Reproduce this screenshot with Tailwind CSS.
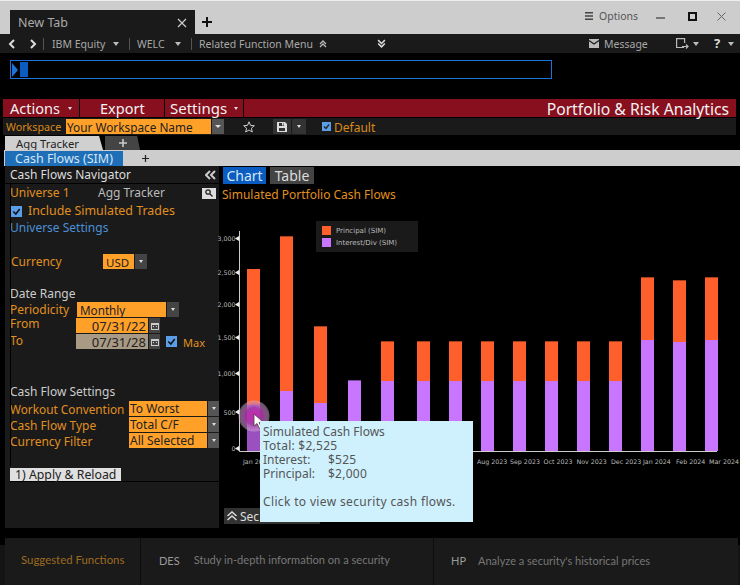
<!DOCTYPE html>
<html lang="en">
<head>
<meta charset="UTF-8" />
<title>Portfolio & Risk Analytics</title>
<script src="https://cdn.jsdelivr.net/npm/@tailwindcss/browser@4"></script>
</head>
<body class="w-[740px] h-[585px] overflow-hidden bg-black font-['Noto_Sans',sans-serif] text-[12px] leading-none">

<!-- tab strip -->
<div class="h-[34px] bg-[#cdcdcd] flex items-end pl-[10px] border-t border-[#eee]">
  <div class="w-[185px] h-[24px] bg-[#1a1a1a] flex items-center justify-between pl-[8px] pr-[8px] pt-[2px] text-[#aaa] text-[12.5px]">
    <span>New Tab</span>
    <svg class="w-[10px] h-[10px]" viewBox="0 0 10 10" stroke="#ccc" stroke-width="1.2"><path d="M1 1l8 8M9 1l-8 8"/></svg>
  </div>
  <svg class="ml-[7px] mb-[7px] w-[10px] h-[10px]" viewBox="0 0 10 10" stroke="#111" stroke-width="2"><path d="M5 0v10M0 5h10"/></svg>
  <div class="ml-auto flex items-center self-start mt-[10px] text-[#555] pr-[14px]">
    <svg class="w-[8px] h-[8px]" viewBox="0 0 8 8" fill="#444"><path d="M0 0h8v1.6H0zM0 3.2h8v1.6H0zM0 6.4h8V8H0z"/></svg>
    <span class="ml-[6px] w-[39px] text-[10.5px] whitespace-nowrap">Options</span>
    <div class="ml-[18px] mt-[3px] w-[9px] h-[2px] bg-[#777]"></div>
    <div class="ml-[23px] w-[9px] h-[9px] border-2 border-[#111]"></div>
    <svg class="ml-[20px] w-[9px] h-[9px]" viewBox="0 0 9 9" stroke="#666" stroke-width="1"><path d="M.5.5l8 8M8.5.5l-8 8"/></svg>
  </div>
</div>

<!-- toolbar -->
<div class="h-[19px] bg-[#1a1a1a] flex items-center text-[#a8a8a8] text-[10.5px] whitespace-nowrap">
  <svg class="ml-[8px] w-[8px] h-[10px]" viewBox="0 0 8 10" fill="none" stroke="#ddd" stroke-width="2"><path d="M6 1L2 5l4 4"/></svg>
  <svg class="ml-[13px] w-[8px] h-[10px]" viewBox="0 0 8 10" fill="none" stroke="#ddd" stroke-width="2"><path d="M2 1l4 4-4 4"/></svg>
  <div class="ml-[6px] w-px h-[12px] bg-[#555]"></div>
  <span class="ml-[8px] pt-px w-[53px]">IBM Equity</span>
  <span class="ml-[8px] w-0 h-0 border-x-[3px] border-x-transparent border-t-[4px] border-t-[#bbb]"></span>
  <div class="ml-[10px] w-px h-[12px] bg-[#555]"></div>
  <span class="ml-[7px] pt-px w-[30px]">WELC</span>
  <span class="ml-[8px] w-0 h-0 border-x-[3px] border-x-transparent border-t-[4px] border-t-[#bbb]"></span>
  <div class="ml-[10px] w-px h-[12px] bg-[#555]"></div>
  <span class="ml-[7px] pt-px w-[114px]">Related Function Menu</span>
  <svg class="ml-[6px] w-[8px] h-[8px]" viewBox="0 0 8 8" fill="none" stroke="#bbb" stroke-width="1.3"><path d="M1 4l3-3 3 3M1 7l3-3 3 3"/></svg>
  <svg class="ml-[50px] w-[9px] h-[9px]" viewBox="0 0 8 8" fill="none" stroke="#ddd" stroke-width="1.3"><path d="M1 1l3 3 3-3M1 4l3 3 3-3"/></svg>
  <svg class="ml-[203px] w-[10px] h-[9px]" viewBox="0 0 10 9"><path fill="#bbb" d="M0 0h10v9H0z"/><path fill="none" stroke="#1a1a1a" stroke-width="1.2" d="M0 1.5l5 3.500 5-3.500"/></svg>
  <span class="ml-[5px] pt-px w-[43px]">Message</span>
  <svg class="ml-[29px] w-[13px] h-[11px]" viewBox="0 0 13 11" fill="none" stroke="#bbb" stroke-width="1.2"><path d="M8 9.500H.6V.6h8V5M6 8.500h6M10 6.500l2 2-2 2"/></svg>
  <span class="ml-[4px] w-0 h-0 border-x-[3px] border-x-transparent border-t-[4px] border-t-[#bbb]"></span>
  <span class="ml-[15px] text-[#ddd] font-bold text-[13px]">?</span>
  <span class="ml-[8px] w-0 h-0 border-x-[3px] border-x-transparent border-t-[4px] border-t-[#bbb]"></span>
</div>

<!-- command line -->
<div class="h-[46px] pt-[7px] pl-[10px]">
  <div class="w-[542px] h-[19px] border border-[#1c74d8] flex items-center pl-px">
    <span class="w-0 h-0 border-y-[7px] border-y-transparent border-l-[6px] border-l-[#1c74d8]"></span>
    <span class="ml-[2px] w-[8px] h-[15px] bg-[#0a5cc0]"></span>
  </div>
</div>

<!-- red menu -->
<div class="ml-[3px] w-[733px] h-[18px] bg-[#870f1e] flex items-center text-[#f2f2f2] text-[14.5px]">
  <div class="w-[76px] h-full flex items-center pl-[7px]"><span>Actions</span><span class="ml-[8px] w-0 h-0 border-x-[2px] border-x-transparent border-t-[3px] border-t-[#ddd]"></span></div>
  <div class="w-[85px] h-full border-l border-black flex items-center pl-[20px]">Export</div>
  <div class="w-[80px] h-full border-x border-black flex items-center pl-[5px] text-[15px]"><span>Settings</span><span class="ml-[7px] w-0 h-0 border-x-[2px] border-x-transparent border-t-[3px] border-t-[#ddd]"></span></div>
  <span class="ml-auto mr-[7px] pt-[3px] text-[15.7px]">Portfolio &amp; Risk Analytics</span>
</div>

<!-- workspace -->
<div class="ml-[3px] mt-px w-[733px] h-[17px] bg-[#1a1a1a] flex items-center text-[#d98a1a]">
  <span class="ml-[3px] w-[57px] text-[10.7px] pt-[2px]">Workspace</span>
  <div class="ml-[3px] w-[145px] h-[15px] bg-[#ffa028] text-[#222] flex items-center pl-[1px] pt-[2px] text-[11.8px]">Your Workspace Name</div>
  <div class="ml-px w-[12px] h-[15px] bg-[#555] flex items-center justify-center"><span class="w-0 h-0 border-x-[3px] border-x-transparent border-t-[3px] border-t-[#ddd]"></span></div>
  <svg class="ml-[19px] w-[12px] h-[12px]" viewBox="0 0 12 12" fill="none" stroke="#ccc" stroke-width="1"><path d="M6 .8l1.500 3.600 3.800.3-2.900 2.500.9 3.800L6 9l-3.300 2 .9-3.800L.7 4.700l3.800-.3z"/></svg>
  <div class="ml-[18px] w-[18px] h-[15px] bg-[#333] flex items-center justify-center"><svg class="w-[10px] h-[10px]" viewBox="0 0 10 10"><path fill="#ddd" d="M0 0h8l2 2v8H0z"/><path fill="#333" d="M2 1h5v3H2zM2 6h6v3H2z"/><path fill="#ddd" d="M5 1h1.500v2.500H5z"/></svg></div>
  <div class="ml-px w-[14px] h-[15px] bg-[#333] flex items-center justify-center"><span class="w-0 h-0 border-x-[2px] border-x-transparent border-t-[3px] border-t-[#ddd]"></span></div>
  <div class="ml-[16px] w-[9px] h-[9px] bg-[#5b9ee8] flex items-center justify-center"><svg class="w-[7px] h-[7px]" viewBox="0 0 7 7" fill="none" stroke="#222" stroke-width="1.3"><path d="M1 3.500l2 2 3-4"/></svg></div>
  <span class="ml-[3px] pt-[2px]">Default</span>
</div>

<!-- page tabs -->
<div class="h-[15px] pl-[5px] flex items-end">
  <div class="w-[98px] h-[14px] bg-[#d0d0d0] text-[#222] pl-[11px] pt-[2px] text-[11.3px] flex items-center [clip-path:polygon(0_0,96%_0,100%_100%,0_100%)]">Agg Tracker</div>
  <div class="ml-[2px] w-[35px] h-[14px] bg-[#444] flex items-center justify-center [clip-path:polygon(0_0,92%_0,100%_100%,0_100%)]"><svg class="w-[8px] h-[8px]" viewBox="0 0 8 8" stroke="#ccc" stroke-width="1.6"><path d="M4 0v8M0 4h8"/></svg></div>
</div>
<div class="ml-[4px] h-[16px] bg-[#cdcdcd] flex items-center pl-px">
  <div class="w-[118px] h-[15px] mt-px bg-[#1f6fb8] text-[#d5e6f5] pl-[10px] pt-[2px] flex items-center text-[12.5px]">Cash Flows (SIM)</div>
  <svg class="ml-[19px] w-[7px] h-[7px]" viewBox="0 0 8 8" stroke="#222" stroke-width="1.4"><path d="M4 0v8M0 4h8"/></svg>
</div>

<!-- main -->
<div class="flex h-[362px]">
  <!-- navigator -->
  <aside class="ml-[5px] w-[214px] bg-[#1a1a1a] flex flex-col text-[#e0901f]">
    <div class="h-[18px] flex items-center pl-[5px] text-[#ddd] border-b border-black">
      <span>Cash Flows Navigator</span>
      <svg class="ml-auto mr-[3px] w-[11px] h-[10px]" viewBox="0 0 11 10" fill="none" stroke="#ccc" stroke-width="2"><path d="M5 1L1 5l4 4M10 1L6 5l4 4"/></svg>
    </div>
    <div class="relative flex-1">
      <div class="absolute left-[5px] top-0 w-px h-[282px] bg-black"></div>
      <div class="pl-[5px] flex flex-col">
        <div class="h-[18px] flex items-center"><span class="w-[88px]">Universe 1</span><span class="text-[#bbb]">Agg Tracker</span><span class="ml-auto mr-[3px] w-[14px] h-[11px] bg-[#ddd] flex items-center justify-center"><svg class="w-[8px] h-[8px]" viewBox="0 0 8 8" fill="none" stroke="#222" stroke-width="1.3"><circle cx="3" cy="3" r="2.200"/><path d="M5 5l2.500 2.500"/></svg></span></div>
        <div class="h-[18px] flex items-center pl-px">
          <div class="w-[11px] h-[11px] bg-[#5b9ee8] flex items-center justify-center"><svg class="w-[9px] h-[9px]" viewBox="0 0 7 7" fill="none" stroke="#111" stroke-width="1.2"><path d="M1 3.500l2 2 3-4"/></svg></div>
          <span class="ml-[6px] text-[12.4px]">Include Simulated Trades</span>
        </div>
        <div class="h-[16px] flex items-center text-[#4a90d9]">Universe Settings</div>
        <div class="mt-[18px] mb-px h-[15px] flex items-center pl-px"><span class="w-[92px] pt-px">Currency</span><div class="w-[31px] h-[15px] bg-[#ffa028] text-[#222] flex items-center pl-[3px] pt-[2px] text-[11.5px]">USD</div><div class="ml-px w-[12px] h-[15px] bg-[#444] flex items-center justify-center"><span class="w-0 h-0 border-x-[2px] border-x-transparent border-t-[3px] border-t-[#ddd]"></span></div></div>
        <div class="mt-[16px] h-[16px] flex items-center text-[#ccc]">Date Range</div>
        <div class="mb-px h-[15px] flex items-center"><span class="w-[67px] pt-px">Periodicity</span><div class="w-[89px] h-[15px] bg-[#ffa028] text-[#222] flex items-center pl-[3px] pt-[2px] text-[11.7px]">Monthly</div><div class="ml-px w-[12px] h-[15px] bg-[#444] flex items-center justify-center"><span class="w-0 h-0 border-x-[2px] border-x-transparent border-t-[3px] border-t-[#ddd]"></span></div></div>
        <div class="mb-px h-[15px] flex items-center"><span class="w-[66px] -mt-[3px]">From</span><div class="w-[72px] h-[15px] bg-[#ffa028] text-[#222] flex items-center justify-end pr-[2px] pt-[2px] text-[13px]">07/31/22</div>
          <div class="ml-px w-[11px] h-[15px] bg-[#444] flex items-center justify-center"><svg class="w-[8px] h-[8px]" viewBox="0 0 8 8"><path fill="#ccc" d="M0 1h8v7H0z"/><path fill="#444" d="M1 3h6v4H1z"/><path fill="#ccc" d="M2 4h1v1H2zM5 4h1v1H5z"/></svg></div></div>
        <div class="mb-px h-[15px] flex items-center"><span class="w-[66px] -mt-[2px]">To</span><div class="w-[72px] h-[15px] bg-[#a89a84] text-[#222] flex items-center justify-end pr-[2px] pt-[2px] text-[13px]">07/31/28</div>
          <div class="ml-px w-[11px] h-[15px] bg-[#444] flex items-center justify-center"><svg class="w-[8px] h-[8px]" viewBox="0 0 8 8"><path fill="#ccc" d="M0 1h8v7H0z"/><path fill="#444" d="M1 3h6v4H1z"/><path fill="#ccc" d="M2 4h1v1H2zM5 4h1v1H5z"/></svg></div>
          <div class="ml-[6px] w-[11px] h-[11px] bg-[#5b9ee8] flex items-center justify-center"><svg class="w-[9px] h-[9px]" viewBox="0 0 7 7" fill="none" stroke="#111" stroke-width="1.2"><path d="M1 3.500l2 2 3-4"/></svg></div>
          <span class="ml-[6px] text-[11px] pt-[2px]">Max</span></div>
        <div class="mt-[34px] h-[17px] pb-[2px] flex items-center text-[#ccc]">Cash Flow Settings</div>
        <div class="mb-px h-[15px] flex items-center"><span class="w-[119px] text-[11.8px] pt-[2px] whitespace-nowrap">Workout Convention</span><div class="w-[78px] h-[15px] bg-[#ffa028] text-[#222] flex items-center pl-px pt-px">To Worst</div><div class="ml-px w-[11px] h-[15px] bg-[#555] flex items-center justify-center"><span class="w-0 h-0 border-x-[2px] border-x-transparent border-t-[3px] border-t-[#ddd]"></span></div></div>
        <div class="mb-px h-[15px] flex items-center"><span class="w-[119px] pt-[2px]">Cash Flow Type</span><div class="w-[78px] h-[15px] bg-[#ffa028] text-[#222] flex items-center pl-px pt-px">Total C/F</div><div class="ml-px w-[11px] h-[15px] bg-[#555] flex items-center justify-center"><span class="w-0 h-0 border-x-[2px] border-x-transparent border-t-[3px] border-t-[#ddd]"></span></div></div>
        <div class="mb-px h-[15px] flex items-center"><span class="w-[119px] pt-[2px]">Currency Filter</span><div class="w-[78px] h-[15px] bg-[#ffa028] text-[#222] flex items-center pl-px pt-px">All Selected</div><div class="ml-px w-[11px] h-[15px] bg-[#555] flex items-center justify-center"><span class="w-0 h-0 border-x-[2px] border-x-transparent border-t-[3px] border-t-[#ddd]"></span></div></div>
        <div class="mt-[19px] flex items-end border-b border-black"><div class="w-[111px] h-[13px] bg-[#e0e0e0] text-[#222] flex items-center pl-[5px] pt-px text-[12.3px]">1) Apply &amp; Reload</div></div>
      </div>
    </div>
  </aside>

  <!-- chart column -->
  <section class="relative flex-1 flex flex-col">
    <div class="h-[19px] pt-px pl-[4px] flex gap-[4px] text-[14px]">
      <div class="w-[43px] h-[17px] bg-[#0a5cc0] text-[#d5e6f5] flex items-center justify-center">Chart</div>
      <div class="w-[44px] h-[17px] bg-[#444] text-[#ddd] flex items-center justify-center">Table</div>
    </div>
    <div class="h-[17px] pl-[3px] pt-[2px] flex items-center text-[#e0901f] text-[12px]">Simulated Portfolio Cash Flows</div>
    <svg class="block overflow-visible" width="521" height="306" viewBox="219 202 521 306" font-family="'DejaVu Sans',sans-serif" font-size="7" fill="#bbb">
      <defs>
        <radialGradient id="hover"><stop offset="0" stop-color="#d020b0"/><stop offset="0.55" stop-color="#a83aa8" stop-opacity=".9"/><stop offset="1" stop-color="#d8b8d8" stop-opacity=".45"/></radialGradient>
      </defs>
      <!-- legend -->
      <rect x="316" y="221" width="102" height="31" fill="#1a1a1a"/>
      <rect x="322" y="226" width="9" height="9" fill="#ff5f2a"/>
      <rect x="322" y="238" width="9" height="9" fill="#c875ff"/>
      <text x="336" y="233">Principal (SIM)</text>
      <text x="336" y="245">Interest/Div (SIM)</text>
      <!-- orange -->
      <g fill="#ff5f2a">
        <rect x="247" y="269" width="13" height="137"/><rect x="280" y="236" width="13" height="156"/><rect x="314" y="326" width="13" height="78"/>
        <rect x="381" y="341" width="13" height="41"/><rect x="417" y="341" width="13" height="41"/><rect x="449" y="341" width="13" height="41"/>
        <rect x="481" y="341" width="13" height="41"/><rect x="513" y="341" width="13" height="41"/><rect x="545" y="341" width="13" height="41"/>
        <rect x="577" y="341" width="13" height="41"/><rect x="609" y="341" width="13" height="41"/>
        <rect x="641" y="277" width="13" height="64"/><rect x="673" y="280" width="13" height="63"/><rect x="705" y="277" width="13" height="64"/>
      </g>
      <!-- purple -->
      <g fill="#c875ff">
        <rect x="247" y="405" width="13" height="46" fill="#9b50c0"/><rect x="280" y="391" width="13" height="60"/><rect x="314" y="403" width="13" height="48"/><rect x="348" y="380" width="13" height="71"/>
        <rect x="381" y="381" width="13" height="70"/><rect x="417" y="381" width="13" height="70"/><rect x="449" y="381" width="13" height="70"/>
        <rect x="481" y="381" width="13" height="70"/><rect x="513" y="381" width="13" height="70"/><rect x="545" y="381" width="13" height="70"/>
        <rect x="577" y="381" width="13" height="70"/><rect x="609" y="381" width="13" height="70"/>
        <rect x="641" y="340" width="13" height="111"/><rect x="673" y="342" width="13" height="109"/><rect x="705" y="340" width="13" height="111"/>
      </g>
      <!-- darker cap on each bar -->
      <path fill="none" stroke="#a8401f" d="M280 236.500h13M314 326.500h13M381 341.500h13M417 341.500h13M449 341.500h13M481 341.500h13M513 341.500h13M545 341.500h13M577 341.500h13M609 341.500h13M641 277.500h13M673 280.500h13M705 277.500h13"/>
      <path fill="none" stroke="#7a4a9a" d="M348 380.500h13"/>
      <!-- axes -->
      <path d="M239.500 231V451.500H717" fill="none" stroke="#ccc"/>
      <path fill="#eee" d="M239 236l-4 2.500 4 2.500zM239 270l-4 2.500 4 2.500zM239 302l-4 2.500 4 2.500zM239 335l-4 2.500 4 2.500zM239 371l-4 2.500 4 2.500zM239 409.500l-4 2.500 4 2.500zM239 446l-4 2.500 4 2.500z"/>
      <g text-anchor="end" font-size="6.300">
        <text x="235.500" y="241">3,000</text><text x="235.500" y="275">2,500</text><text x="235.500" y="307">2,000</text><text x="235.500" y="340">1,500</text><text x="235.500" y="376">1,000</text><text x="235.500" y="415">500</text><text x="235.500" y="451">0</text>
      </g>
      <g font-size="6.300">
        <text x="243" y="464">Jan 2023</text><text x="477" y="464">Aug 2023</text><text x="510" y="464">Sep 2023</text><text x="543.500" y="464">Oct 2023</text><text x="576.500" y="464">Nov 2023</text><text x="611" y="464">Dec 2023</text><text x="643" y="464">Jan 2024</text><text x="676" y="464">Feb 2024</text><text x="709" y="464">Mar 2024</text>
      </g>
      <!-- hover marker -->
      <circle cx="254" cy="416" r="15.500" fill="url(#hover)"/>
      <path d="M254 414v12l3-2.500 2.500 5 2-1-2.500-5 4-.5z" fill="#fff" stroke="#444" stroke-width=".8"/>
    </svg>
    <div class="ml-[5px] w-[96px] h-[16px] bg-[#333] flex items-center pl-[2px] text-[#ddd]">
      <svg class="w-[12px] h-[10px]" viewBox="0 0 11 10" fill="none" stroke="#ddd" stroke-width="1.500"><path d="M1 5l4.500-4L10 5M1 9l4.500-4L10 9"/></svg>
      <span class="ml-[2px] pt-[2px]">Sec</span>
    </div>
    <!-- tooltip -->
    <div class="absolute left-[41px] top-[255px] w-[213px] h-[101px] bg-[#cff1fe] text-[#555] text-[12px] leading-[14px] pl-[3px] pt-[4px] whitespace-nowrap">
      <div>Simulated Cash Flows</div>
      <div class="tracking-[.25px]">Total: $2,525</div>
      <div class="flex"><span class="w-[65px]">Interest:</span><span class="tracking-[.25px]">$525</span></div>
      <div class="flex"><span class="w-[65px]">Principal:</span><span class="tracking-[.25px]">$2,000</span></div>
      <div class="mt-[14px] tracking-[.35px]">Click to view security cash flows.</div>
    </div>
  </section>
</div>

<!-- suggested functions -->
<div class="mt-[10px] h-[47px] pl-[5px] pr-[2px] bg-[linear-gradient(#000_7px,#141414_7px)]">
  <div class="h-full bg-[#1a1a1a] flex items-center text-[11px] font-['Lato',sans-serif] text-[#777]">
    <div class="w-[136px] h-full flex items-center pl-[16px] pb-[3px] text-[#9c6a20] text-[11.4px] border-r border-[#0c0c0c]">Suggested Functions</div>
    <div class="w-[293px] h-full flex items-center pl-[18px] pb-[3px] border-r border-[#0c0c0c]"><span class="text-[#999]">DES</span><span class="ml-[14px] text-[11.1px]">Study in-depth information on a security</span></div>
    <div class="h-full flex items-center pl-[17px] pb-[3px]"><span class="text-[#999]">HP</span><span class="ml-[12px]">Analyze a security's historical prices</span></div>
  </div>
</div>
</body>
</html>
